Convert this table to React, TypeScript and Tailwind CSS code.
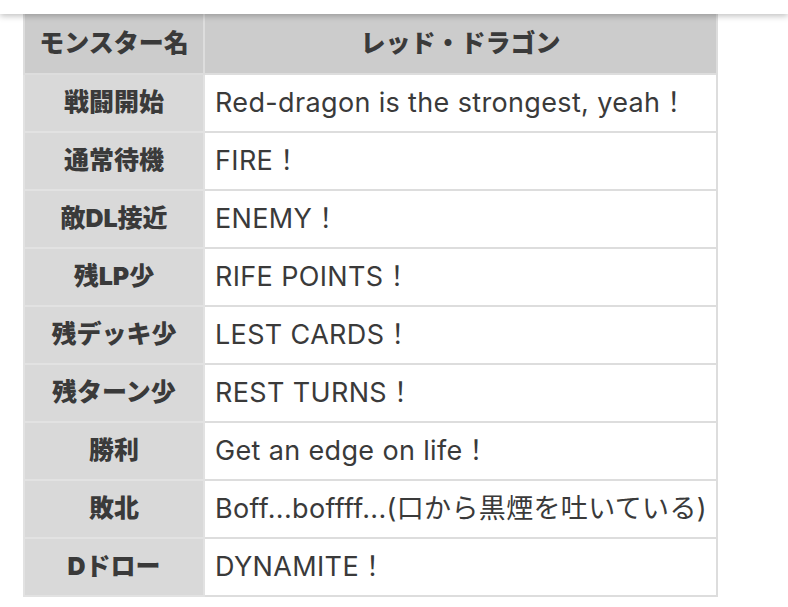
import React from "react";

const rows: [string, string][] = [
  ["戦闘開始", "Red-dragon is the strongest, yeah！"],
  ["通常待機", "FIRE！"],
  ["敵DL接近", "ENEMY！"],
  ["残LP少", "RIFE POINTS！"],
  ["残デッキ少", "LEST CARDS！"],
  ["残ターン少", "REST TURNS！"],
  ["勝利", "Get an edge on life！"],
  ["敗北", "Boff...boffff...(口から黒煙を吐いている)"],
  ["Dドロー", "DYNAMITE！"],
];

const font = {
  fontFamily: 'Inter, "Noto Sans CJK JP", sans-serif',
};

export default function App() {
  return (
    <div className="w-[788px] h-[607px] bg-white overflow-hidden" style={font}>
      <div className="relative z-10 h-[14px] bg-white shadow-[0_2px_6px_rgba(0,0,0,0.25)]" />
      <div className="pl-[23px]">
        <table className="w-[695px] border-collapse text-[#3a3a3a]">
          <tbody>
            <tr className="h-[60px] bg-[#cccccc]">
              <th className="w-[180px] border-2 border-t-0 border-[#dddddd] text-[25px] font-black text-center">
                モンスター名
              </th>
              <th className="border-2 border-t-0 border-[#dddddd] text-[25px] font-black text-center">
                レッド・ドラゴン
              </th>
            </tr>
            {rows.map(([k, v]) => (
              <tr key={k} className="h-[58px]">
                <td className="border-2 border-[#e2e2e2] bg-[#d9d9d9] text-[25px] font-black text-center whitespace-nowrap">
                  {k}
                </td>
                <td className="border-2 border-[#dddddd] bg-white pl-[10px] text-[27px] tracking-[0.35px] whitespace-nowrap">
                  {v}
                </td>
              </tr>
            ))}
          </tbody>
        </table>
      </div>
    </div>
  );
}
